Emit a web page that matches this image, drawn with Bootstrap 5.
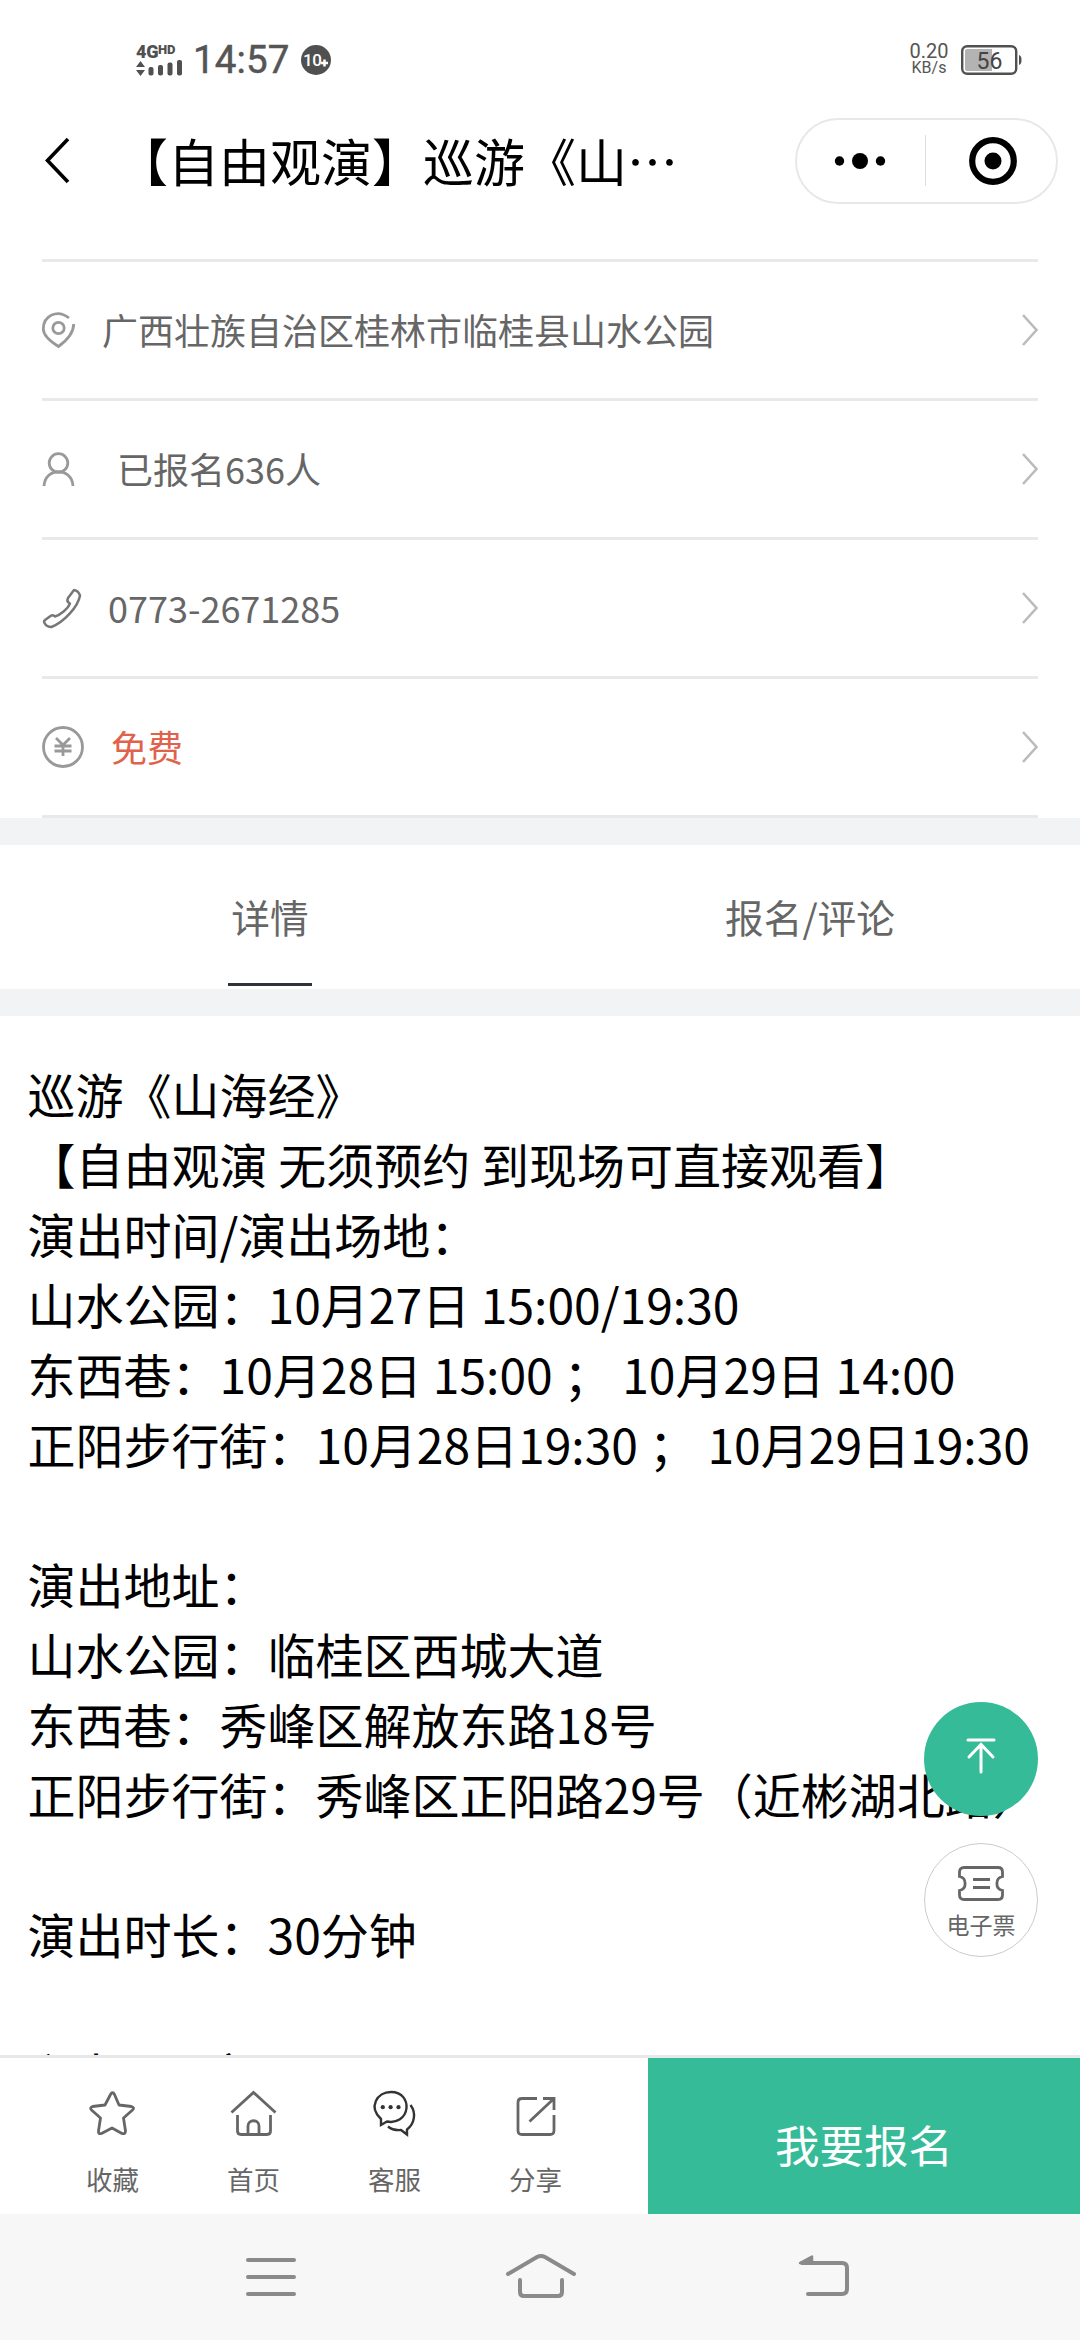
<!DOCTYPE html>
<html lang="zh-CN">
<head>
<meta charset="utf-8">
<meta name="viewport" content="width=device-width, initial-scale=1">
<title>巡游《山海经》</title>
<link href="https://cdn.jsdelivr.net/npm/bootstrap@5.3.0/dist/css/bootstrap.min.css" rel="stylesheet">
<style>
  body { width: 1080px; height: 2340px; overflow: hidden; font-family: "Noto Sans CJK SC", sans-serif; color: #000; background: #fff; }
  svg { display: block; flex: none; overflow: visible; }
  .status-bar { height: 118px; padding: 0 59px 0 136px; color: #555; font-family: Roboto, sans-serif; }
  .status-left { margin-top: 42px; height: 36px; }
  .net-label { font: 900 18px/17px Roboto, sans-serif; color: #505050; white-space: nowrap; width: 47px; letter-spacing: -.3px; }
  .net-label sup { font-size: 13px; font-weight: 900; top: -4px; line-height: 0; vertical-align: baseline; }
  .clock { font-size: 38.5px; line-height: 38px; margin-left: 10px; width: 104px; letter-spacing: .1px; -webkit-text-stroke: .5px #555; }
  .notif { width: 30px; height: 30px; border-radius: 50%; background: #505050; color: #fff; font: 500 17px/30px Roboto, sans-serif; letter-spacing: -.5px; padding-left: 2px; margin-left: 4px; }
  .notif svg { margin: 14px 0 0 0; }
  .speed { margin: 43px -1px 0 0; width: 40px; font-size: 20px; }
  .speed div { line-height: 17px; }
  .speed div + div { font-size: 16px; line-height: 16px; }
  .battery { margin: 45px -2px 0 13px; }
  .title-bar { height: 86px; padding: 0 22px 0 45px; }
  .page-title { font-size: 51px; line-height: 74px; margin: -3px 0 0 48px; white-space: nowrap; }
  .capsule { width: 263px; height: 86px; border: 2px solid #e8e8e8; border-radius: 43px; }
  .info-list { margin: 55px 42px 0; border-top: 3px solid #e9e9e9; border-radius: 0; }
  .info-list .list-group-item { height: 139px; padding: 0; border: 0; border-bottom: 3px solid #e9e9e9; color: #666; font-size: 36px; line-height: 50px; background: none; }
  .info-list span { margin-top: -3px; }
  .info-list .fee { color: #e0624c; }
  .gap-bar { height: 27px; background: #f1f3f5; }
  .tab-row { height: 144px; font-size: 38.7px; color: #666; }
  .tab-row .nav-link { color: #666; padding: 0; width: 84px; height: 141px; line-height: 142px; white-space: nowrap; display: flex; justify-content: center; border-radius: 0; }
  .tab-row .nav-link.active { border-bottom: 3px solid #30343a; }
  .detail { height: 1039px; padding: 42px 0 0 27.5px; font-size: 48px; line-height: 70px; white-space: pre; overflow: hidden; }
  .detail p { margin: 0; height: 70px; }
  .bottom-bar { height: 159px; border-top: 3px solid #e8e8e8; background: #fff; }
  .actions { width: 648px; padding: 0 42px; }
  .actions a { color: #666; font-size: 26.5px; line-height: 36px; text-decoration: none; padding-top: 30px; }
  .actions svg { margin-bottom: 23px; }
  .signup { background: #36bb98; border: 0; border-radius: 0; color: #fff; font-size: 44.5px; padding: 17px 0 0; }
  .signup:hover { background: #36bb98; }
  .sys-nav { height: 126px; background: #f7f7f7; padding: 39px 0 0 246px; }
  .float-btn { right: 42px; width: 114px; height: 114px; border-radius: 50%; }
  .to-top { top: 1702px; background: #36bb98; padding-top: 36px; }
  .ticket { top: 1843px; background: #fff; border: 1px solid #ccc; color: #666; font-size: 23px; line-height: 30px; padding-top: 22px; }
  .ticket span { margin-top: 8px; }
</style>
<script src="https://cdn.jsdelivr.net/npm/bootstrap@5.3.0/dist/js/bootstrap.bundle.min.js"></script>
</head>
<body class="position-relative">

<header>
  <div class="status-bar d-flex justify-content-between align-items-start">
    <div class="status-left d-flex align-items-center">
      <div>
        <div class="net-label">4G<sup>HD</sup></div>
        <svg width="47" height="17" viewBox="0 0 47 17" fill="#505050"><path d="M4.500 1 9 7H0zM0 10h9L4.500 16z"/><rect x="12.500" y="7" width="5" height="8.500" rx="2"/><rect x="22" y="5" width="5" height="10.500" rx="2"/><rect x="31.500" y="2.500" width="5" height="13" rx="2"/><rect x="41" y="0" width="5" height="15.500" rx="2"/></svg>
      </div>
      <div class="clock">14:57</div>
      <div class="notif d-flex">10<svg width="7" height="8" viewBox="0 0 7 8"><path d="M3.500 .5v7M0 4h7" stroke="#fff" stroke-width="2.500"/></svg></div>
    </div>
    <div class="d-flex align-items-start">
      <div class="speed text-center"><div>0.20</div><div>KB/s</div></div>
      <svg class="battery" width="62" height="30" viewBox="0 0 62 30"><rect x="1.200" y="1.200" width="54" height="27.600" rx="5" fill="none" stroke="#505050" stroke-width="2.400"/><path d="M6 4h25v22H6a2 2 0 0 1-2-2V6a2 2 0 0 1 2-2z" fill="#b3b3b3"/><path d="M58 10c2 1 2.500 2 2.500 5s-.5 4-2.500 5z" fill="#505050"/><text x="28.500" y="23.500" text-anchor="middle" font-family="Roboto" font-size="23" fill="#444">56</text></svg>
    </div>
  </div>
  <div class="title-bar d-flex align-items-center">
    <svg width="24" height="46" viewBox="0 0 24 46"><path d="M23 1 2.500 22.500 23 44" fill="none" stroke="#000" stroke-width="3.600"/></svg>
    <h1 class="page-title fw-normal">【自由观演】巡游《山⋯</h1>
    <div class="capsule ms-auto">
      <svg width="258" height="82" viewBox="797 120 258 82"><circle cx="839.500" cy="161" r="4.700"/><circle cx="860" cy="161" r="8"/><circle cx="880.500" cy="161" r="4.700"/><path d="M925.500 135v51" stroke="#ddd"/><circle cx="993" cy="161" r="20.800" fill="none" stroke="#000" stroke-width="6.200"/><circle cx="993" cy="161" r="8.500"/></svg>
    </div>
  </div>
</header>

<main>
  <div class="list-group info-list">
    <a class="list-group-item d-flex align-items-center">
      <svg width="60" height="36" viewBox="42 312 60 36" fill="none" stroke="#999" stroke-width="2.800"><path d="M69 318C57 308.500 43.300 316 43.300 329c0 7 8 13 15.200 17.500C66 341 73.700 334 73.700 324"/><circle cx="58.500" cy="328" r="5.700"/></svg>
      <span>广西壮族自治区桂林市临桂县山水公园</span>
      <svg class="ms-auto" width="16" height="36" viewBox="0 0 16 36"><path d="M1 3 14.500 18 1 33" fill="none" stroke="#bbb" stroke-width="2.600"/></svg>
    </a>
    <a class="list-group-item d-flex align-items-center">
      <svg width="75" height="34" viewBox="42 452 75 34" fill="none" stroke="#999" stroke-width="2.800"><circle cx="58.500" cy="463" r="9.300"/><path d="M44 486c1-19 28-19 29 0"/></svg>
      <span>已报名636人</span>
      <svg class="ms-auto" width="16" height="36" viewBox="0 0 16 36"><path d="M1 3 14.500 18 1 33" fill="none" stroke="#bbb" stroke-width="2.600"/></svg>
    </a>
    <a class="list-group-item d-flex align-items-center">
      <svg width="66" height="40" viewBox="42 588 66 40" fill="none" stroke="#777" stroke-width="2.500" stroke-linejoin="round"><path d="M74 590l-6 8c-1 2-1 4 2 5.500C68 609 60 615 55 616.500c-1.500-2-3-1.500-4.500-.5l-5.500 4c-1.500 1-1 2-.5 3 1 2 3 4 7 4C64 622 78 607 80 595.500c-1-3-3-5-6-5.500z"/></svg>
      <span>0773-2671285</span>
      <svg class="ms-auto" width="16" height="36" viewBox="0 0 16 36"><path d="M1 3 14.500 18 1 33" fill="none" stroke="#bbb" stroke-width="2.600"/></svg>
    </a>
    <a class="list-group-item d-flex align-items-center">
      <svg width="69" height="42" viewBox="0 0 69 42" fill="none" stroke="#999" stroke-width="2.800"><circle cx="21" cy="21" r="19.500"/><path d="M14 12l7 7 7-7M12.500 20h17M12.500 25h17M21 19v11"/></svg>
      <span class="fee">免费</span>
      <svg class="ms-auto" width="16" height="36" viewBox="0 0 16 36"><path d="M1 3 14.500 18 1 33" fill="none" stroke="#bbb" stroke-width="2.600"/></svg>
    </a>
  </div>

  <div class="gap-bar"></div>
  <nav class="tab-row nav row g-0">
    <div class="col-6 d-flex justify-content-center"><a class="nav-link active">详情</a></div>
    <div class="col-6 d-flex justify-content-center"><a class="nav-link">报名/评论</a></div>
  </nav>
  <div class="gap-bar"></div>

  <article class="detail"><p>巡游《山海经》</p><p>【自由观演 无须预约 到现场可直接观看】</p><p>演出时间/演出场地：</p><p>山水公园：10月27日 15:00/19:30</p><p>东西巷：10月28日 15:00 ； 10月29日 14:00</p><p>正阳步行街：10月28日19:30 ； 10月29日19:30</p><p></p><p>演出地址：</p><p>山水公园：临桂区西城大道</p><p>东西巷：秀峰区解放东路18号</p><p>正阳步行街：秀峰区正阳路29号（近彬湖北路）</p><p></p><p>演出时长：30分钟</p><p></p><p>主办：　 市</p></article>
</main>

<footer>
  <div class="bottom-bar d-flex">
    <div class="actions row g-0">
      <a class="col-3 d-flex flex-column align-items-center">
        <svg width="46" height="50" viewBox="89.500 2088 46 50" fill="none" stroke="#666" stroke-width="2.800" stroke-linejoin="round"><path d="M110 2094.500q2-3.500 4 0l4.500 10.500 12.500 1.500q3.500 1 1 3.500l-9 8 2 13q0 3.500-3.500 2.500l-10-5.500-10.500 5.500q-3.500 1-3-2.500l2-13-9-8q-2-2.500 1-3.500l12.500-1.500z"/></svg>收藏</a>
      <a class="col-3 d-flex flex-column align-items-center">
        <svg width="46" height="50" viewBox="231 2088 46 50" fill="none" stroke="#666" stroke-width="2.800"><path d="M231.500 2112.500 253.500 2092.500 275.500 2112.500M237.500 2115v16q0 3.500 3.500 3.500h26q3.500 0 3.500-3.500v-16M248 2134v-8c0-7 11-7 11 0v8"/></svg>首页</a>
      <a class="col-3 d-flex flex-column align-items-center">
        <svg width="46" height="50" viewBox="372 2088 46 50" fill="none" stroke="#333" stroke-width="2.400"><path d="M381 2125v-6C368 2107 377 2092 391 2092c12 0 16 9 15.500 16-1 10-10 15.500-19.500 13.500z"/><path d="M410.500 2105c6 8 4 19-3.500 24.500v5l-6-4.500c-6 .5-10-1-13-3.500"/><g fill="#333" stroke="none"><circle cx="382.800" cy="2107.200" r="2.100"/><circle cx="390.600" cy="2107.200" r="2.100"/><circle cx="398.500" cy="2107.200" r="2.100"/></g></svg>客服</a>
      <a class="col-3 d-flex flex-column align-items-center">
        <svg width="46" height="50" viewBox="513 2088 46 50" fill="none" stroke="#666" stroke-width="2.800"><path d="M537 2098.500h-15q-4 0-4 4v28q0 4 4 4h28q4 0 4-4V2115M543 2098.500h11V2110M554 2098.500 529.500 2121.500"/></svg>分享</a>
    </div>
    <button class="btn signup flex-fill">我要报名</button>
  </div>
  <div class="sys-nav">
    <svg width="604" height="48" viewBox="246 2253 604 48" fill="none" stroke="#8a8a8a" stroke-width="4" stroke-linecap="round"><path d="M248 2260h46M248 2277h46M248 2294h46M508 2274 537 2257q4-2 8 0L574 2274M520 2280v12q0 4 4 4h34q4 0 4-4v-12M802 2263h40q5 0 5 5v21q0 5-5 5h-34"/><path d="M800 2263 812 2256.500V2263z" fill="#8a8a8a" stroke-width="2.500" stroke-linejoin="round"/></svg>
  </div>
</footer>

<a class="float-btn to-top position-absolute d-flex justify-content-center align-items-start">
  <svg width="30" height="36" viewBox="0 0 30 36" fill="none" stroke="#fff" stroke-width="3" stroke-linecap="round"><path d="M2 2h26M15 6.500V34M3 19 15 6.500 27 19"/></svg>
</a>
<a class="float-btn ticket position-absolute d-flex flex-column align-items-center text-decoration-none">
  <svg width="46" height="35" viewBox="0 0 46 35" fill="none" stroke="#666" stroke-width="2.800"><path d="M6 1.500h34q4.500 0 4.500 4.500v4.500C37 12 37 23 44.500 24.500V29q0 4.500-4.500 4.500H6q-4.500 0-4.500-4.500v-4.500C9 23 9 12 1.500 10.500V6q0-4.500 4.500-4.500zM15 13.500h17M15 21.500h17"/></svg>
  <span>电子票</span>
</a>
</body>
</html>
